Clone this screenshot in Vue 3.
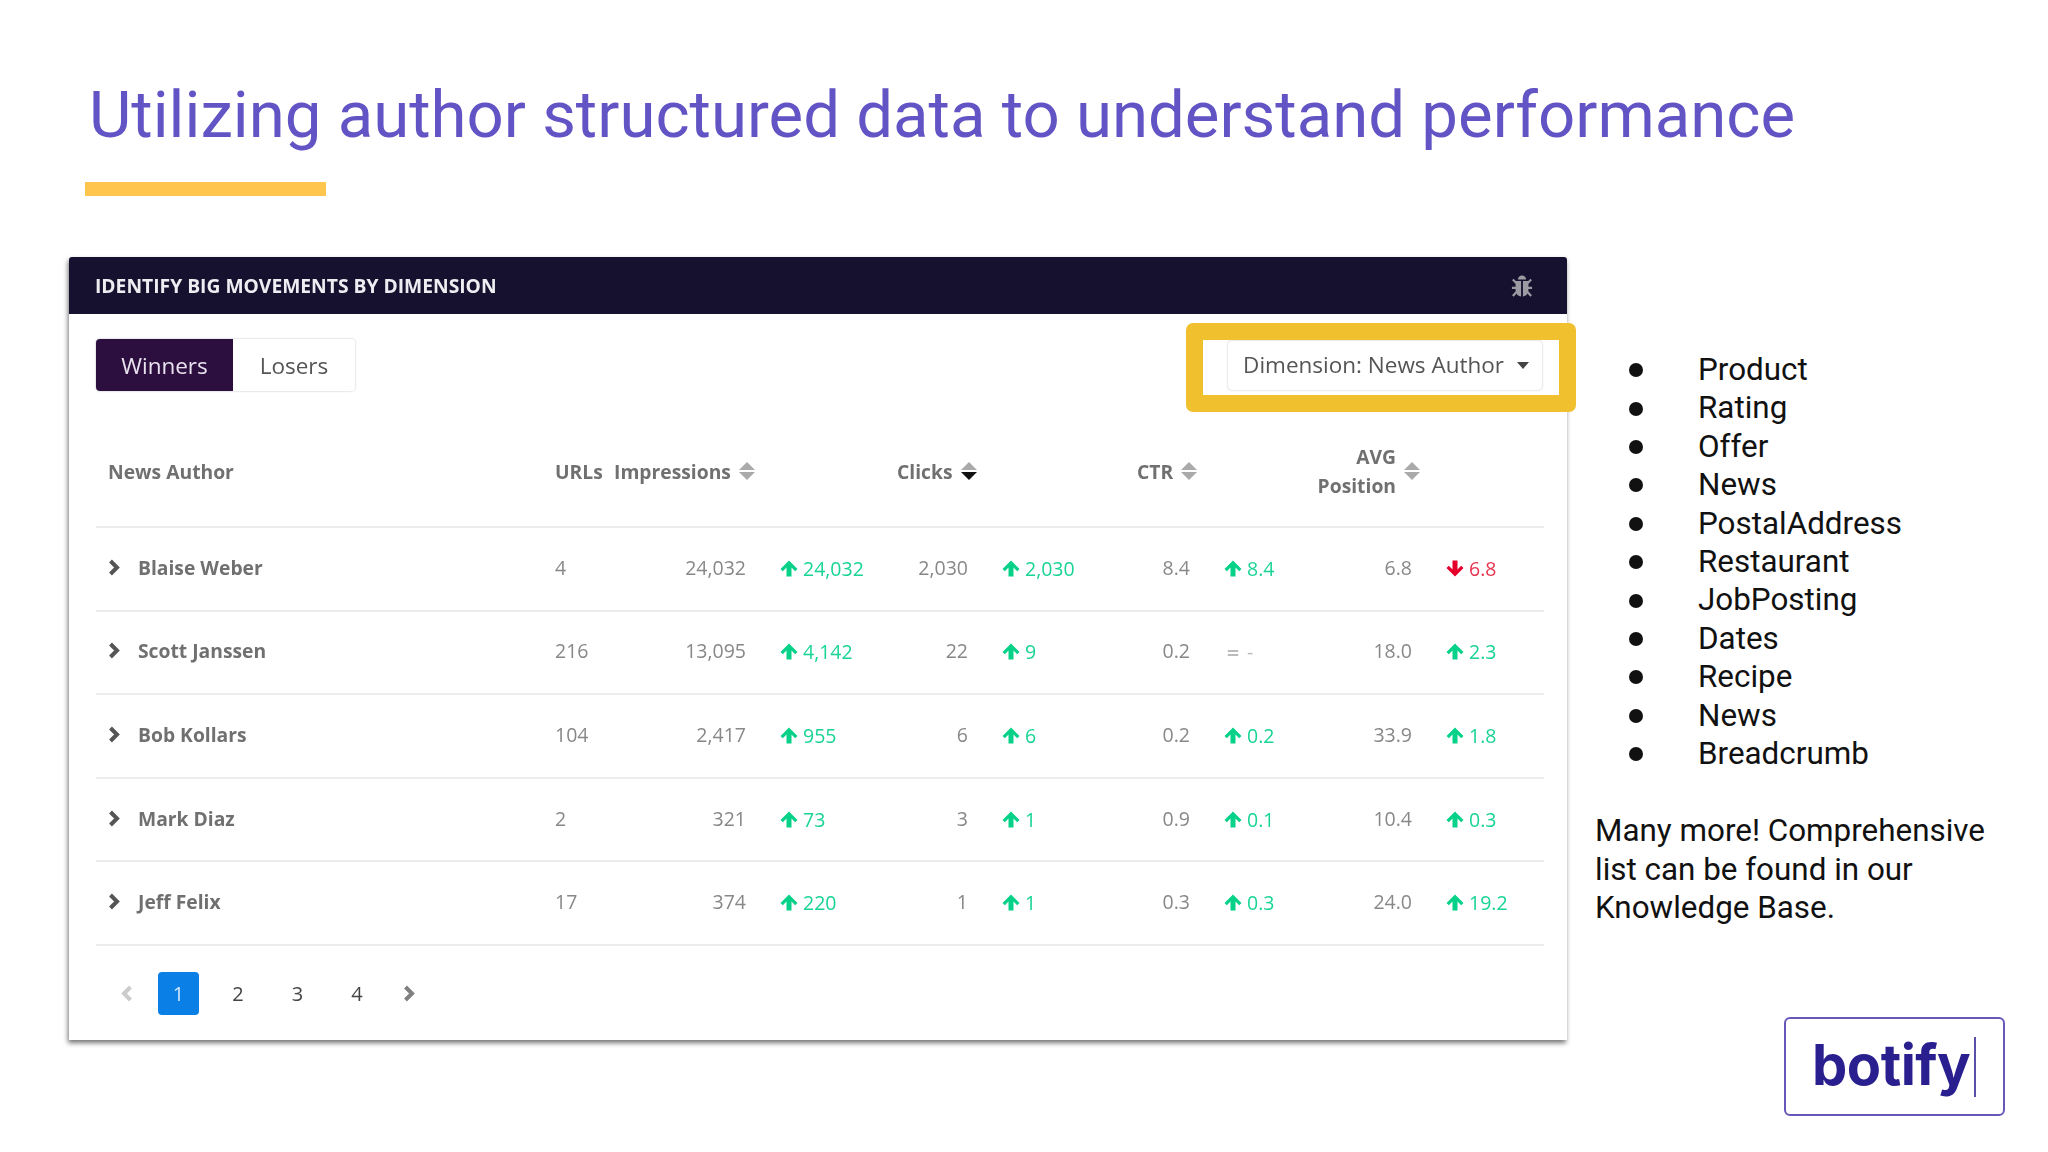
<template>
  <div class="slide">
    <h1 class="title">Utilizing author structured data to understand performance</h1>
    <div class="title-bar"></div>

    <div class="body">
      <section class="card">
        <header class="card-head">
          <span class="card-title">IDENTIFY BIG MOVEMENTS BY DIMENSION</span>
          <svg class="bug" viewBox="0 0 24 26" width="22" height="24">
            <path d="M7.500 6a4.500 4.500 0 0 1 9 0z" />
            <path d="M5 7.500h6v17C7.500 24 5 21 5 17zM13 7.500h6V17c0 4-2.500 7-6 7.500z" />
            <path d="M2 6l4 4M22 6l-4 4M1 15h5M23 15h-5M2 24l4.500-5M22 24l-4.500-5" class="bug-legs" />
          </svg>
        </header>

        <div class="toolbar">
          <div class="tabs">
            <button class="tab active">Winners</button>
            <button class="tab">Losers</button>
          </div>
          <button class="dropdown">
            Dimension: News Author
            <span class="caret"></span>
          </button>
        </div>

        <div class="highlight"></div>

        <div class="thead">
          <div class="th">News Author</div>
          <div class="th">URLs</div>
          <div class="th">Impressions <span class="sort"><i class="up"></i><i class="down"></i></span></div>
          <div class="th">Clicks <span class="sort"><i class="up"></i><i class="down on"></i></span></div>
          <div class="th">CTR <span class="sort"><i class="up"></i><i class="down"></i></span></div>
          <div class="th">
            <span class="avg-label">AVG<br />Position</span>
            <span class="sort"><i class="up"></i><i class="down"></i></span>
          </div>
        </div>

        <div class="rows">
          <div v-for="row in rows" :key="row.name" class="tr">
            <div class="name">
              <svg class="chev" viewBox="0 0 12 17" width="12" height="17"><path d="M2.500 2l6.500 6.500-6.500 6.500" /></svg>
              {{ row.name }}
            </div>
            <div class="urls">{{ row.urls }}</div>
            <template v-for="(cell, i) in row.cells" :key="i">
              <div class="val">{{ cell[0] }}</div>
              <div class="delta" :class="cell[2]">
                <svg v-if="cell[2] === 'up'" class="arrow" viewBox="0 0 18 17" width="18" height="17">
                  <path d="M9 .5 17.500 9l-2.300 2.300-3.700-3.700V16.500h-5V7.600l-3.700 3.700L.5 9z" />
                </svg>
                <svg v-else-if="cell[2] === 'down'" class="arrow" viewBox="0 0 18 17" width="18" height="17">
                  <path d="M9 16.500 17.500 8l-2.300-2.300-3.700 3.700V.5h-5v8.900L2.800 5.700.5 8z" />
                </svg>
                <span v-else class="same">=</span>
                {{ cell[1] }}
              </div>
            </template>
          </div>
        </div>

        <nav class="pager">
          <svg class="pg-arrow prev" viewBox="0 0 12 17" width="12" height="17"><path d="M9.500 2 3 8.500l6.500 6.500" /></svg>
          <span class="page current">1</span>
          <span class="page">2</span>
          <span class="page">3</span>
          <span class="page">4</span>
          <svg class="pg-arrow next" viewBox="0 0 12 17" width="12" height="17"><path d="M2.500 2 9 8.500 2.500 15" /></svg>
        </nav>
      </section>

      <aside class="side">
        <ul class="list">
          <li v-for="(item, i) in types" :key="i">{{ item }}</li>
        </ul>
        <p class="note">Many more! Comprehensive list can be found in our Knowledge Base.</p>
        <div class="logo"><span class="logo-text">botify</span><span class="logo-cursor"></span></div>
      </aside>
    </div>
  </div>
</template>

<script setup>
const rows = [
  { name: 'Blaise Weber', urls: '4', cells: [['24,032', '24,032', 'up'], ['2,030', '2,030', 'up'], ['8.4', '8.4', 'up'], ['6.8', '6.8', 'down']] },
  { name: 'Scott Janssen', urls: '216', cells: [['13,095', '4,142', 'up'], ['22', '9', 'up'], ['0.2', '-', 'flat'], ['18.0', '2.3', 'up']] },
  { name: 'Bob Kollars', urls: '104', cells: [['2,417', '955', 'up'], ['6', '6', 'up'], ['0.2', '0.2', 'up'], ['33.9', '1.8', 'up']] },
  { name: 'Mark Diaz', urls: '2', cells: [['321', '73', 'up'], ['3', '1', 'up'], ['0.9', '0.1', 'up'], ['10.4', '0.3', 'up']] },
  { name: 'Jeff Felix', urls: '17', cells: [['374', '220', 'up'], ['1', '1', 'up'], ['0.3', '0.3', 'up'], ['24.0', '19.2', 'up']] }
]

const types = ['Product', 'Rating', 'Offer', 'News', 'PostalAddress', 'Restaurant', 'JobPosting', 'Dates', 'Recipe', 'News', 'Breadcrumb']
</script>

<style>
html, body {
  margin: 0;
  background: #fff;
}
</style>

<style scoped>
.slide {
  width: 2048px;
  height: 1152px;
  box-sizing: border-box;
  padding-top: 74px;
  overflow: hidden;
  font-family: Roboto, sans-serif;
}

.title {
  margin: 0 0 0 89px;
  font-size: 65.33px;
  line-height: 82px;
  font-weight: 400;
  color: #6254c4;
  white-space: nowrap;
}

.title-bar {
  width: 241px;
  height: 14px;
  margin: 26px 0 0 85px;
  background: #ffc54d;
}

.body {
  display: flex;
  margin-top: 61px;
  padding-left: 69px;
}

.card {
  position: relative;
  width: 1498px;
  height: 783px;
  background: #fff;
  border-radius: 3px 3px 0 0;
  box-shadow: -1px 3px 5px rgba(0, 0, 0, 0.55);
  font-family: "Open Sans", sans-serif;
}

.card-head {
  display: flex;
  justify-content: space-between;
  align-items: center;
  height: 57px;
  padding: 0 34px 0 26px;
  background: #15112e;
  border-radius: 3px 3px 0 0;
}

.card-title {
  color: #eeeef2;
  font-size: 19.250px;
  font-weight: 700;
  filter: blur(0.4px);
}

.bug {
  fill: #9c9ba3;
  filter: blur(0.5px);
}

.bug-legs {
  fill: none;
  stroke: #9c9ba3;
  stroke-width: 2.400;
}

.toolbar {
  display: flex;
  justify-content: space-between;
  align-items: flex-start;
  box-sizing: border-box;
  height: 128px;
  margin: 0 25px 0 27px;
  padding-top: 25px;
  filter: blur(0.4px);
}

.tabs {
  display: flex;
  height: 52px;
  border-radius: 4px;
  box-shadow: 0 0 2px rgba(0, 0, 0, 0.3);
}

.tab {
  width: 137px;
  padding: 0;
  border: 0;
  background: #fff;
  color: #555;
  font: 400 22.500px "Open Sans", sans-serif;
  border-radius: 0 4px 4px 0;
}

.tab + .tab {
  width: 122px;
}

.tab.active {
  background: #2d0f3f;
  color: #e8e2ee;
  border-radius: 4px 0 0 4px;
}

.dropdown {
  display: flex;
  align-items: center;
  gap: 13px;
  height: 49px;
  padding: 0 13px 3px 15px;
  margin-top: 2px;
  border: 0;
  background: #fff;
  color: #555;
  font: 400 22.500px "Open Sans", sans-serif;
  border-radius: 4px;
  box-shadow: 0 0 2px rgba(0, 0, 0, 0.3);
}

.caret {
  width: 0;
  height: 0;
  margin-top: 3px;
  border: 6.500px solid transparent;
  border-top: 7px solid #444;
  border-bottom: 0;
}

.highlight {
  position: absolute;
  left: 1117px;
  top: 66px;
  width: 390px;
  height: 89px;
  box-sizing: border-box;
  border: 17px solid #f0c02f;
  border-radius: 7px;
}

.thead {
  display: grid;
  grid-template-columns: 459px 59px 283px 240px 163px 1fr;
  align-items: center;
  height: 57px;
  margin: 0 23px 0 27px;
  color: #707070;
  font-size: 19.300px;
  font-weight: 700;
  filter: blur(0.4px);
}

.th {
  display: flex;
  align-items: center;
  gap: 8px;
  white-space: nowrap;
}

.th:first-child {
  padding-left: 12px;
}

.avg-label {
  width: 96px;
  text-align: right;
  line-height: 29px;
}

.sort {
  display: inline-flex;
  flex-direction: column;
  gap: 2px;
}

.sort i {
  display: block;
  width: 0;
  height: 0;
  border-left: 8px solid transparent;
  border-right: 8px solid transparent;
}

.sort .up {
  border-bottom: 8px solid #aaa;
}

.sort .down {
  border-top: 8px solid #aaa;
}

.sort .down.on {
  border-top-color: #111;
}

.rows {
  margin: 27px 23px 0 27px;
  border-bottom: 2px solid #ececee;
}

.tr {
  display: grid;
  grid-template-columns: 459px 100px 91px 154px 68px 154px 68px 154px 68px 1fr;
  align-items: center;
  box-sizing: border-box;
  height: 83.600px;
  padding-bottom: 3px;
  border-top: 2px solid #ececee;
  color: #888;
  font-size: 19.500px;
}

.name {
  display: flex;
  align-items: center;
  gap: 18px;
  padding-left: 12px;
  color: #707070;
  font-size: 19.300px;
  font-weight: 700;
  filter: blur(0.4px);
}

.chev,
.pg-arrow {
  fill: none;
  stroke-width: 4;
}

.chev {
  stroke: #555;
}

.urls,
.val {
  filter: blur(0.4px);
}

.val {
  text-align: right;
}

.delta {
  display: flex;
  align-items: center;
  gap: 5px;
  padding: 2px 0 0 34px;
  filter: blur(0.4px);
}

.delta.up {
  color: #19d495;
}

.delta.down {
  color: #e8334f;
}

.delta.flat {
  color: #bbb;
}

.delta.up .arrow {
  fill: #05d188;
}

.delta.down .arrow {
  fill: #e4002b;
}

.same {
  width: 18px;
  font-size: 22px;
  font-weight: 600;
  text-align: center;
}

.pager {
  display: flex;
  align-items: center;
  height: 43px;
  margin: 26px 0 0 52px;
  color: #444;
  font-size: 20px;
  filter: blur(0.4px);
}

.page {
  display: flex;
  align-items: center;
  justify-content: center;
  width: 41px;
  height: 43px;
  margin-right: 18.500px;
}

.page.current {
  background: #0a7fe6;
  color: #cfe6ff;
  border-radius: 4px;
}

.pg-arrow {
  stroke: #808080;
}

.pg-arrow.prev {
  stroke: #ccc;
  margin-right: 25px;
}

.pg-arrow.next {
  margin-left: 7px;
}

.side {
  display: flex;
  flex-direction: column;
  flex: 1;
  box-sizing: border-box;
  height: 859px;
  padding: 94px 44px 0 28px;
  font-size: 31.400px;
  line-height: 38.400px;
  color: #111;
}

.list {
  margin: 0;
  padding: 0 0 0 34px;
  list-style: none;
}

.list li {
  display: flex;
  align-items: center;
  gap: 55px;
}

.list li::before {
  content: "";
  width: 14px;
  height: 14px;
  border-radius: 50%;
  background: #111;
}

.note {
  margin: 39px 0 0;
}

.logo {
  display: flex;
  align-items: center;
  gap: 4px;
  align-self: flex-end;
  width: 221px;
  height: 99px;
  margin-top: auto;
  margin-right: -1px;
  padding-left: 26px;
  box-sizing: border-box;
  border: 2px solid #6558b8;
  border-radius: 6px;
}

.logo-text {
  padding-bottom: 4px;
  font-family: Inter, sans-serif;
  font-weight: 700;
  font-size: 56px;
  line-height: 60px;
  letter-spacing: -0.5px;
  color: #2a1f8f;
}

.logo-cursor {
  width: 2px;
  height: 60px;
  background: #5a50a8;
}
</style>
